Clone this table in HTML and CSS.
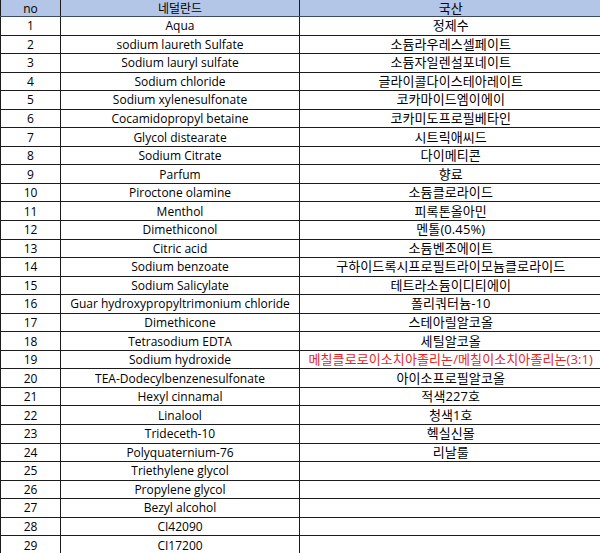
FILE: index.html
```html
<!DOCTYPE html>
<html lang="ko">
<head>
<meta charset="utf-8">
<link rel="stylesheet" href="styles.css">
</head>
<body>
<table class="ing">
<colgroup><col class="c-no"><col class="c-nl"><col class="c-kr"></colgroup>
<thead>
<tr><th>no</th><th>네덜란드</th><th class="kr">국산</th></tr>
</thead>
<tbody>
<tr><td>1</td><td>Aqua</td><td class="kr">정제수</td></tr>
<tr><td>2</td><td>sodium laureth Sulfate</td><td class="kr">소듐라우레스셀페이트</td></tr>
<tr><td>3</td><td>Sodium lauryl sulfate</td><td class="kr">소듐자일렌설포네이트</td></tr>
<tr><td>4</td><td>Sodium chloride</td><td class="kr">글라이콜다이스테아레이트</td></tr>
<tr><td>5</td><td>Sodium xylenesulfonate</td><td class="kr">코카마이드엠이에이</td></tr>
<tr><td>6</td><td>Cocamidopropyl betaine</td><td class="kr">코카미도프로필베타인</td></tr>
<tr><td>7</td><td>Glycol distearate</td><td class="kr">시트릭애씨드</td></tr>
<tr><td>8</td><td>Sodium Citrate</td><td class="kr">다이메티콘</td></tr>
<tr><td>9</td><td>Parfum</td><td class="kr">향료</td></tr>
<tr><td>10</td><td>Piroctone olamine</td><td class="kr">소듐클로라이드</td></tr>
<tr><td>11</td><td>Menthol</td><td class="kr">피록톤올아민</td></tr>
<tr><td>12</td><td>Dimethiconol</td><td class="kr">멘톨(0.45%)</td></tr>
<tr><td>13</td><td>Citric acid</td><td class="kr">소듐벤조에이트</td></tr>
<tr><td>14</td><td>Sodium benzoate</td><td class="kr">구하이드록시프로필트라이모늄클로라이드</td></tr>
<tr><td>15</td><td>Sodium Salicylate</td><td class="kr">테트라소듐이디티에이</td></tr>
<tr><td>16</td><td>Guar hydroxypropyltrimonium chloride</td><td class="kr">폴리쿼터늄-10</td></tr>
<tr><td>17</td><td>Dimethicone</td><td class="kr">스테아릴알코올</td></tr>
<tr><td>18</td><td>Tetrasodium EDTA</td><td class="kr">세틸알코올</td></tr>
<tr><td>19</td><td>Sodium hydroxide</td><td class="kr red">메칠클로로이소치아졸리논/메칠이소치아졸리논(3:1)</td></tr>
<tr><td>20</td><td>TEA-Dodecylbenzenesulfonate</td><td class="kr">아이소프로필알코올</td></tr>
<tr><td>21</td><td>Hexyl cinnamal</td><td class="kr">적색227호</td></tr>
<tr><td>22</td><td>Linalool</td><td class="kr">청색1호</td></tr>
<tr><td>23</td><td>Trideceth-10</td><td class="kr">헥실신몰</td></tr>
<tr><td>24</td><td>Polyquaternium-76</td><td class="kr">리날룰</td></tr>
<tr><td>25</td><td>Triethylene glycol</td><td class="kr"></td></tr>
<tr><td>26</td><td>Propylene glycol</td><td class="kr"></td></tr>
<tr><td>27</td><td>Bezyl alcohol</td><td class="kr"></td></tr>
<tr><td>28</td><td>CI42090</td><td class="kr"></td></tr>
<tr><td>29</td><td>CI17200</td><td class="kr"></td></tr>
</tbody>
</table>
</body>
</html>
```
FILE: styles.css
```css
html, body {
  margin: 0;
  padding: 0;
  background: #fff;
}
body {
  font-family: "Open Sans", "Noto Sans CJK KR", sans-serif;
  font-size: 12px;
  color: #000;
  overflow: hidden;
}
.ing {
  border-collapse: collapse;
  table-layout: fixed;
  width: 601px;
}
.c-no { width: 60px; }
.c-nl { width: 239px; }
.c-kr { width: 302px; }
.ing th,
.ing td {
  border: 1px solid #1c1c1c;
  padding: 0;
  text-align: center;
  vertical-align: middle;
  white-space: nowrap;
  overflow: hidden;
  line-height: 15px;
  font-weight: normal;
}
.ing th {
  background: #b4c6e7;
  height: 16px;
  border-top: none;
  border-bottom-color: #3d4a63;
}
.ing td {
  height: 17.55px;
}
.ing tr > :last-child {
  border-right: none;
}
.ing .kr {
  font-size: 13px;
  letter-spacing: 0.1px;
}
.red {
  color: #e8231e;
}
```
